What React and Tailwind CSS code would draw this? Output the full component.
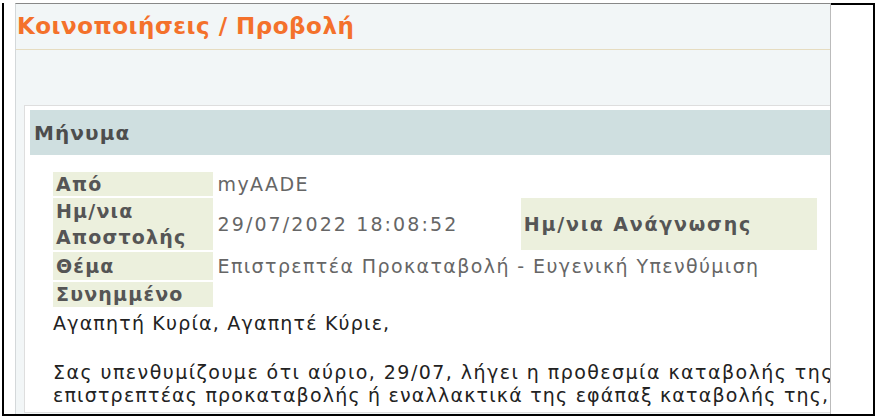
import React from 'react';

const labelCls = "bg-[#ecf0dd] text-[#555] font-bold px-[3px] tracking-[1.2px]";
const valueCls = "text-[#666] align-middle px-[3px] tracking-[1.4px] whitespace-nowrap";

export default function App() {
    return (
        <div className="w-[880px] h-[420px] bg-white overflow-hidden pt-[3px] pl-[2px]" style={{ fontFamily: '"DejaVu Sans", Verdana, sans-serif' }}>
            <div className="w-[873px] h-[413px] flex border-l-2 border-r-2 border-b-2 border-black">
                <div className="w-[11px] shrink-0"></div>

                <div className="w-[816px] shrink-0 bg-[#f2f6f7] border-t border-[#888] border-l border-l-[#d4d8da] border-r border-r-[#bbb] overflow-hidden">
                    <div className="h-[46px] border-b border-[#e6dcc0] flex items-center pl-[1px]">
                        <h1 className="text-[23px] font-bold text-[#f4712b] leading-none tracking-[0.5px]">Κοινοποιήσεις / Προβολή</h1>
                    </div>

                    <div className="pt-[55px] pl-[8px]">
                        <div className="w-[900px] bg-white border border-[#dedede] p-[5px] pt-[4px]">
                            <div className="h-[45px] bg-[#cfdfe0] flex items-center pl-[4px]">
                                <span className="text-[20px] font-bold text-[#4d4d4d] tracking-[1.1px]">Μήνυμα</span>
                            </div>

                            <div className="pl-[23px] pt-[15px] text-[19px]">
                                <table className="border-separate border-spacing-[2px] -ml-[2px]">
                                    <tbody>
                                        <tr>
                                            <td className={`${labelCls} w-[161px] align-top leading-[24px]`}>Από</td>
                                            <td className={`${valueCls} leading-[24px]`}>myAADE</td>
                                            <td></td>
                                            <td></td>
                                        </tr>
                                        <tr>
                                            <td className={`${labelCls} align-top leading-[26px]`}>Ημ/νια<br />Αποστολής</td>
                                            <td className={`${valueCls} w-[306px] tracking-[2.1px]`}>29/07/2022 18:08:52</td>
                                            <td className={`${labelCls} w-[301px] align-middle tracking-[1.8px]`}>Ημ/νια Ανάγνωσης</td>
                                            <td className={`${valueCls} w-[100px]`}></td>
                                        </tr>
                                        <tr>
                                            <td className={`${labelCls} align-middle leading-[28px]`}>Θέμα</td>
                                            <td className={`${valueCls} leading-[28px]`} colSpan="3">Επιστρεπτέα Προκαταβολή - Ευγενική Υπενθύμιση</td>
                                        </tr>
                                        <tr>
                                            <td className={`${labelCls} align-middle leading-[25px]`}>Συνημμένο</td>
                                            <td colSpan="3"></td>
                                        </tr>
                                    </tbody>
                                </table>

                                <div className="text-[#222] leading-[23px] whitespace-nowrap mt-[3px] tracking-[1.2px]">
                                    <p>Αγαπητή Κυρία, Αγαπητέ Κύριε,</p>
                                    <p className="mt-[26px] tracking-[1.45px]">Σας υπενθυμίζουμε ότι αύριο, 29/07, λήγει η προθεσμία καταβολής της</p>
                                    <p>επιστρεπτέας προκαταβολής ή εναλλακτικά της εφάπαξ καταβολής της,</p>
                                </div>
                            </div>
                        </div>
                    </div>
                </div>

                <div className="flex-1 border-t-2 border-black"></div>
            </div>
        </div>
    );
}
